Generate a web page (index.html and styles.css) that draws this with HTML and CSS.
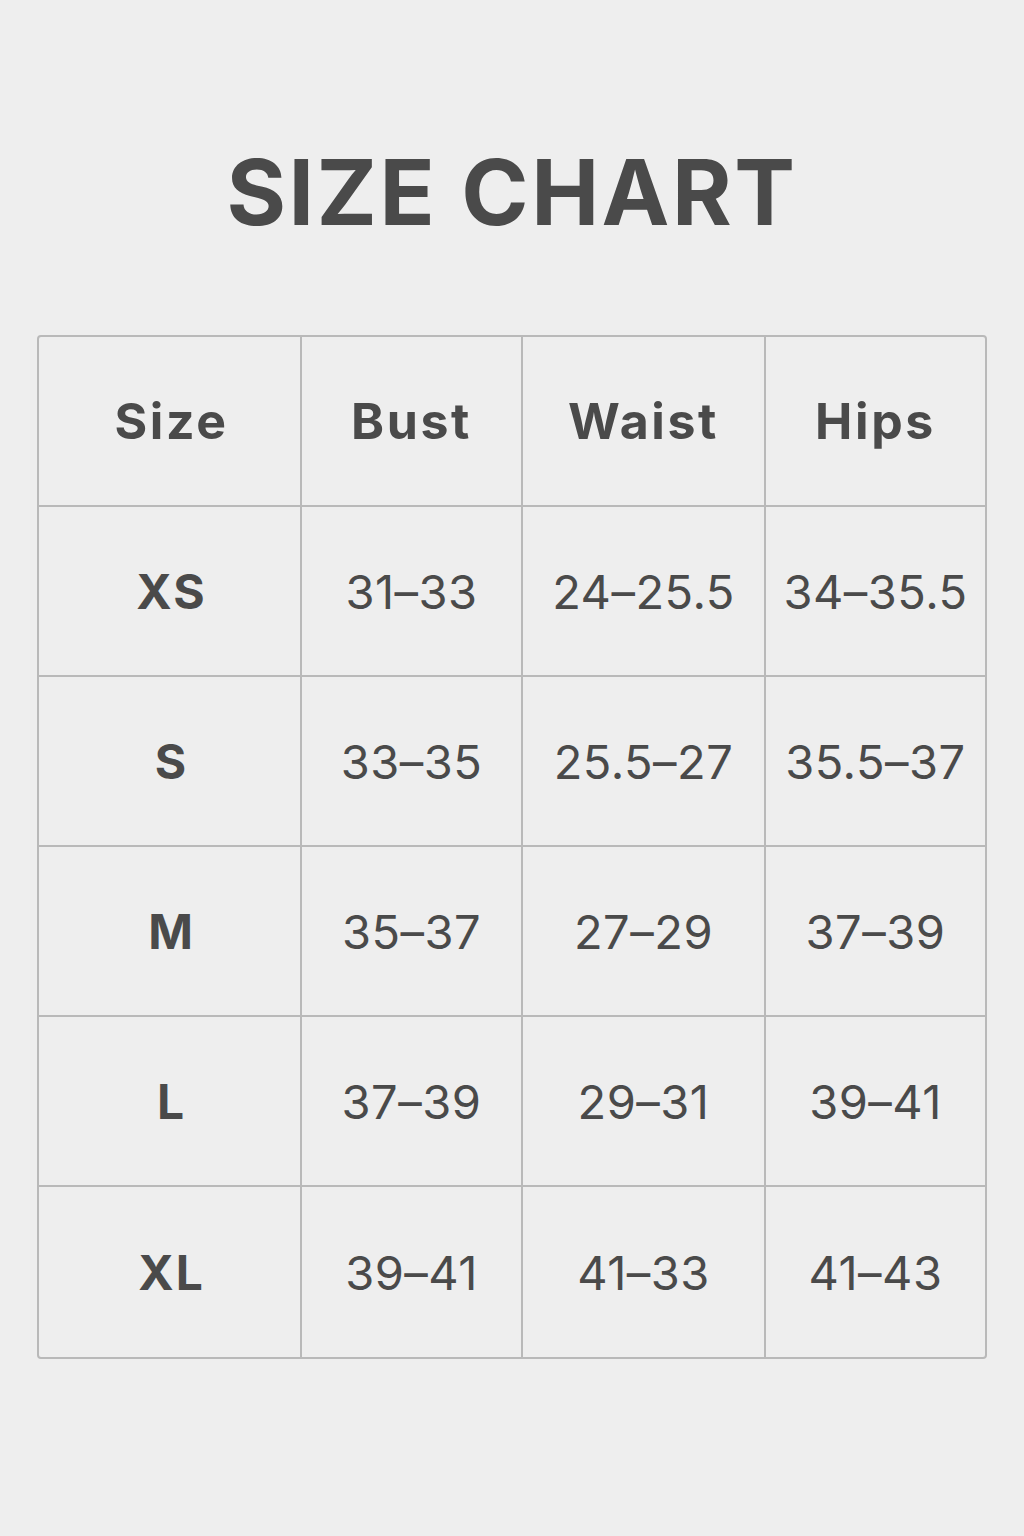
FILE: index.html
```html
<!DOCTYPE html>
<html lang="en">
<head>
<meta charset="utf-8">
<title>Size Chart</title>
<link rel="stylesheet" href="styles.css">
</head>
<body>
<main class="page">
  <h1 class="title">SIZE CHART</h1>
  <div class="chart">
    <div class="cell head">Size</div>
    <div class="cell head">Bust</div>
    <div class="cell head">Waist</div>
    <div class="cell head">Hips</div>

    <div class="cell size">XS</div>
    <div class="cell num">31–33</div>
    <div class="cell num">24–25.5</div>
    <div class="cell num">34–35.5</div>

    <div class="cell size">S</div>
    <div class="cell num">33–35</div>
    <div class="cell num">25.5–27</div>
    <div class="cell num">35.5–37</div>

    <div class="cell size">M</div>
    <div class="cell num">35–37</div>
    <div class="cell num">27–29</div>
    <div class="cell num">37–39</div>

    <div class="cell size">L</div>
    <div class="cell num">37–39</div>
    <div class="cell num">29–31</div>
    <div class="cell num">39–41</div>

    <div class="cell size">XL</div>
    <div class="cell num">39–41</div>
    <div class="cell num">41–33</div>
    <div class="cell num">41–43</div>
  </div>
</main>
</body>
</html>
```

FILE: styles.css
```css
html, body {
  margin: 0;
  padding: 0;
  background: #eeeeee;
}

.page {
  width: 1024px;
  height: 1536px;
  box-sizing: border-box;
  padding: 0 37px;
  display: flex;
  flex-direction: column;
  align-items: center;
  font-family: Inter, "Liberation Sans", sans-serif;
  color: #4a4a4a;
}

.title {
  margin: 136px 0 0;
  height: 199px;
  font-size: 91px;
  line-height: 112px;
  font-weight: 700;
  letter-spacing: 2.5px;
}

.chart {
  width: 950px;
  box-sizing: border-box;
  border: 2px solid #b9b9b9;
  border-radius: 4px;
  display: grid;
  grid-template-columns: 263px 221px 243px 219px;
  grid-auto-rows: 170px;
}

.cell {
  box-sizing: border-box;
  display: flex;
  align-items: center;
  justify-content: center;
  border-right: 2px solid #b9b9b9;
  border-bottom: 2px solid #b9b9b9;
}

.cell:nth-child(4n) {
  border-right: none;
}

.cell:nth-last-child(-n+4) {
  border-bottom: none;
}

.cell:nth-child(4n+1) {
  padding-left: 4px;
}

.head {
  font-size: 50px;
  font-weight: 700;
  letter-spacing: 2.6px;
}

.size {
  font-size: 48px;
  font-weight: 700;
  letter-spacing: 2px;
}

.num {
  font-size: 47px;
  font-weight: 400;
  letter-spacing: 0.5px;
}
```
